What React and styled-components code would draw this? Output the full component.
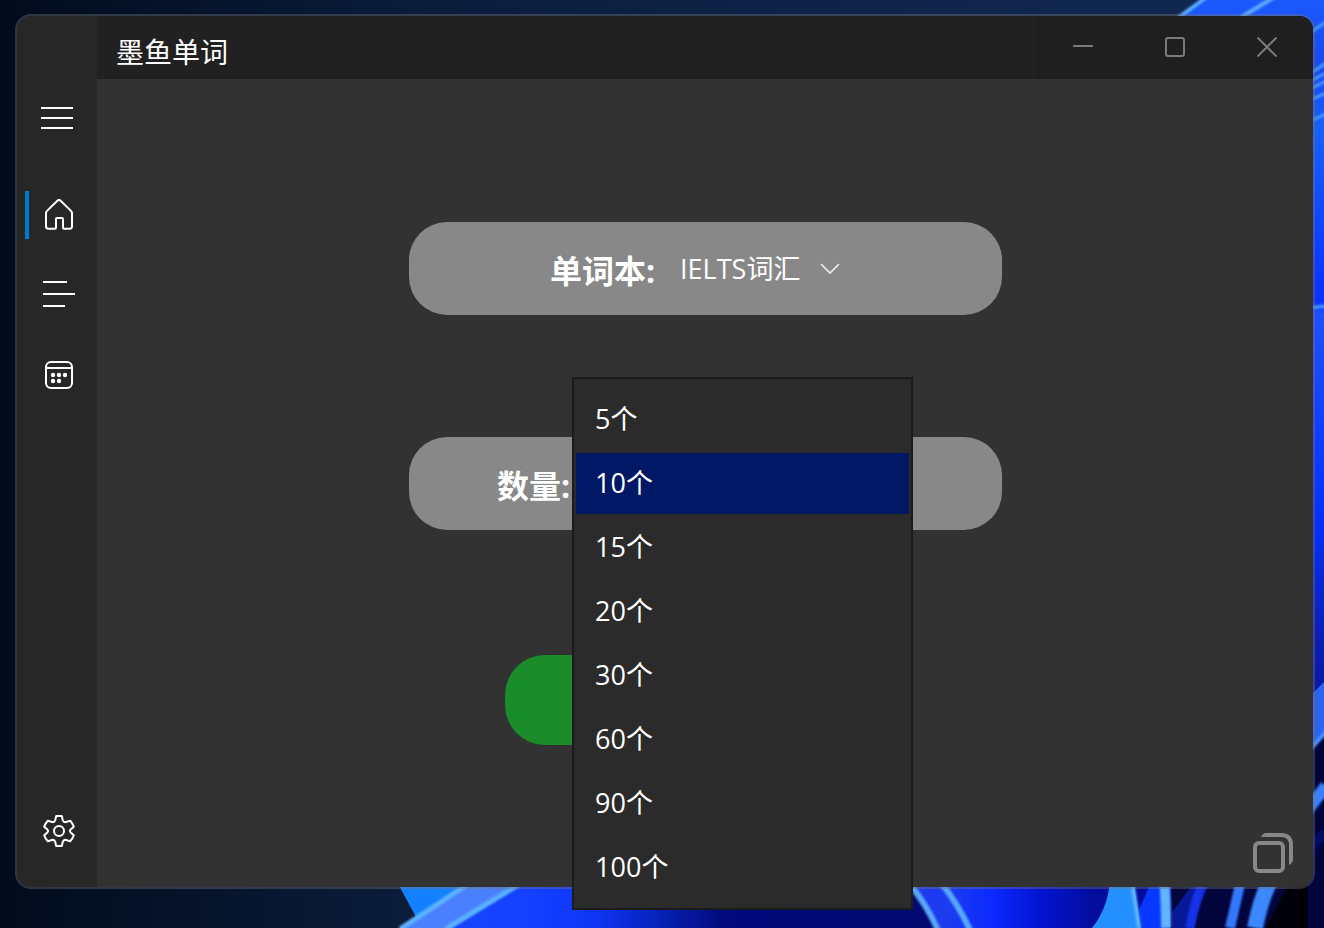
import React, { useState } from "react";
import styled, { createGlobalStyle } from "styled-components";

const GlobalStyle = createGlobalStyle`
  *, *::before, *::after { box-sizing: border-box; }
  body { margin: 0; background: #010b1c; }
  body, button, select {
    font-family: "Open Sans", "Noto Sans CJK SC", sans-serif;
    color: #fff;
  }
  button, select {
    margin: 0;
    padding: 0;
    border: 0;
    background: none;
    cursor: pointer;
  }
`;

const Desktop = styled.div`
  position: relative;
  display: flex;
  min-height: 100vh;
  padding: 14px 9px 39px 15px;
`;

const WallpaperArt = styled.svg`
  position: absolute;
  inset: 0;
  width: 100%;
  height: 100%;
`;

const AppWindow = styled.div`
  position: relative;
  flex: 1;
  display: flex;
  border: 2px solid rgba(118, 118, 118, 0.4);
  border-radius: 16px;
  background: #323232;
  background-clip: padding-box;
`;

const Sidebar = styled.aside`
  display: flex;
  flex-direction: column;
  width: 80px;
  padding: 62px 0 16px;
  background: #272727;
  border-radius: 14px 0 0 14px;
`;

const MenuToggle = styled.button`
  display: grid;
  place-items: center;
  height: 80px;
`;

const Nav = styled.nav`
  flex: 1;
  display: flex;
  flex-direction: column;
  padding-top: 17px;
`;

const NavButton = styled.button`
  display: flex;
  align-items: center;
  gap: 14px;
  height: 80px;
  padding-left: 8px;

  &::before {
    content: "";
    width: 4px;
    height: 48px;
    background: ${(p) => (p.$active ? "#0078d4" : "transparent")};
  }
  &:last-child { margin-top: ${(p) => (p.$end ? "auto" : "0")}; }
`;

const Content = styled.div`
  flex: 1;
  display: flex;
  flex-direction: column;
  min-width: 0;
`;

const TitleBar = styled.header`
  display: flex;
  align-items: stretch;
  justify-content: space-between;
  height: 63px;
  padding-left: 19px;
  background: #212121;
  border-radius: 0 14px 0 0;
`;

const Title = styled.h1`
  margin: 0;
  padding-top: 8px;
  font-size: 28px;
  line-height: 56px;
  font-weight: 400;
`;

const WindowControls = styled.div`
  display: flex;
  background: #1f1f1f;
  border-radius: 0 14px 0 0;
`;

const WindowButton = styled.button`
  display: grid;
  place-items: center;
  width: 92px;
  padding-bottom: 2px;
  color: #7a7a7a;
`;

const Main = styled.main`
  flex: 1;
  display: flex;
  flex-direction: column;
  padding: 143px 20px 14px;
`;

const Form = styled.form`
  display: flex;
  flex-direction: column;
  align-items: center;
  gap: 125px;
`;

const Fields = styled.div`
  display: flex;
  flex-direction: column;
  gap: 122px;
  width: 100%;
  max-width: 593px;
`;

const Pill = styled.div`
  display: flex;
  align-items: center;
  justify-content: center;
  gap: ${(p) => p.$gap}px;
  height: 93px;
  border-radius: 38px;
  background: #888;
`;

const Label = styled.label`
  padding-top: 4px;
  font-size: 32px;
  line-height: 44px;
  font-weight: 700;
  white-space: nowrap;
`;

const SelectBox = styled.div`
  display: grid;
  align-items: center;
  width: 180px;
  color: #eee;
  > * { grid-area: 1 / 1; }
  > svg { justify-self: end; margin-right: 20px; pointer-events: none; }
`;

const Select = styled.select`
  appearance: none;
  width: 100%;
  height: 60px;
  font-size: 27px;
  outline: none;
  option { background: #2b2b2b; }
`;

const Combo = styled.div`
  position: relative;
  width: 341px;
  height: 93px;
`;

const ComboButton = styled.button`
  width: 100%;
  height: 100%;
  padding: 0 22px;
  font-size: 27px;
  text-align: left;
`;

const Menu = styled.div`
  position: absolute;
  top: -60px;
  left: 0;
  z-index: 2;
  display: flex;
  flex-direction: column;
  gap: 3px;
  width: 100%;
  padding: 10px 2px;
  border: 2px solid #1b1b1b;
  background: #2b2b2b;
`;

const MenuItem = styled.button`
  height: 61px;
  padding: 0 19px 2px;
  font-size: 27px;
  line-height: 40px;
  text-align: left;
  background: ${(p) => (p.$selected ? "#001866" : "transparent")};
`;

const StartButton = styled.button`
  width: 100%;
  max-width: 400px;
  height: 90px;
  border-radius: 40px;
  background: #1a8c29;
  font-size: 32px;
  font-weight: 700;
`;

const Footer = styled.footer`
  display: flex;
  justify-content: flex-end;
  margin-top: auto;
`;

const CompactButton = styled.button`
  display: flex;
  color: #888;
`;

const Icon = ({ size = 32, width = 2, children }) => (
  <svg
    width={size}
    height={size}
    viewBox={`0 0 ${size} ${size}`}
    fill="none"
    stroke="currentColor"
    strokeWidth={width}
    aria-hidden="true"
  >
    {children}
  </svg>
);

function Wallpaper() {
  return (
    <WallpaperArt viewBox="0 0 1324 928" preserveAspectRatio="none" aria-hidden="true">
      <defs>
        <linearGradient id="sky">
          <stop offset="0" stopColor="#010b1c" />
          <stop offset="0.3" stopColor="#0a1c3a" />
          <stop offset="0.8" stopColor="#10274f" />
          <stop offset="1" stopColor="#10274f" />
        </linearGradient>
        <linearGradient id="petals">
          <stop offset="0" stopColor="#1648ff" />
          <stop offset="0.24" stopColor="#1440ff" />
          <stop offset="0.36" stopColor="#0e36f6" />
          <stop offset="0.48" stopColor="#0622b8" />
          <stop offset="0.6" stopColor="#020a7c" />
          <stop offset="1" stopColor="#020a70" />
        </linearGradient>
        <linearGradient id="right" x2="0" y2="1">
          <stop offset="0" stopColor="#1b5cff" />
          <stop offset="0.12" stopColor="#1848ee" />
          <stop offset="0.2" stopColor="#1860ff" />
          <stop offset="0.44" stopColor="#0a30ff" />
          <stop offset="0.46" stopColor="#2050ff" />
          <stop offset="0.75" stopColor="#0630fa" />
          <stop offset="0.9" stopColor="#0a20b8" />
          <stop offset="1" stopColor="#0a18a0" />
        </linearGradient>
        <linearGradient id="center">
          <stop offset="0" stopColor="#2038f0" />
          <stop offset="0.1" stopColor="#1c3cf0" />
          <stop offset="0.2" stopColor="#0a2aff" />
          <stop offset="0.32" stopColor="#0414d0" />
          <stop offset="0.45" stopColor="#040c9c" />
          <stop offset="1" stopColor="#041096" />
        </linearGradient>
        <filter id="soft">
          <feGaussianBlur stdDeviation="1" />
        </filter>
      </defs>
      <rect width="1324" height="928" fill="url(#sky)" />
      <path d="M396 880L422 928H520V880Z" fill="#1280ff" />
      <path d="M470 880L400 928H940L900 880Z" fill="url(#petals)" />
      <path d="M470 880L400 928H446L522 880Z" fill="#4a80ff" />
      <path d="M908 880L940 928H1324V700H1300V880Z" fill="url(#center)" />
      <path d="M1110 880Q1108 908 1092 928H1141L1133 880Z" fill="#2490ff" />
      <path d="M1152 880L1139 910L1141 928H1170V880Z" fill="#0838ff" />
      <path d="M1172 880H1300L1324 860V928H1171Z" fill="#02043c" />
      <path d="M1172 912L1196 880H1212Q1200 900 1194 928H1172Z" fill="#061a98" />
      <path d="M1290 880L1324 820V928H1266Z" fill="#000008" />
      <path d="M1178 18Q1200 -2 1230 -14H1324V700H1300V18Z" fill="url(#right)" />
      <path d="M1308 698H1324V928H1308Z" fill="#02043c" />
      <path d="M1308 698L1324 682V734L1308 754Z" fill="#2c64f0" />
      <g fill="none" filter="url(#soft)">
        <path d="M474 880L400 929M526 880L446 929" stroke="#5cb4ff" strokeWidth="5" />
        <path d="M910 884Q926 904 938 930M942 884Q958 904 970 930" stroke="#58a8ff" strokeWidth="6" />
        <path d="M1132 880L1139 928" stroke="#62b4ff" strokeWidth="4" />
        <path d="M1164 880Q1166 900 1166 928" stroke="#62b4ff" strokeWidth="10" />
        <path d="M1204 880Q1194 902 1190 928" stroke="#1232e8" strokeWidth="9" />
        <path d="M1241 880L1230 928" stroke="#3078ff" strokeWidth="10" />
        <path d="M1270 880Q1260 902 1255 928" stroke="#3a88ff" strokeWidth="16" />
        <path d="M1178 18L1208 -4M1240 18L1276 -4" stroke="#5cacff" strokeWidth="4" />
        <path
          d="M1308 34L1326 22M1308 75L1326 63M1308 82L1326 73M1308 90L1326 81M1308 101L1326 93M1308 122L1326 114M1308 308L1326 306"
          stroke="#4a9cff"
          strokeWidth="3"
        />
        <path d="M1306 754L1326 732" stroke="#4c94ff" strokeWidth="4" />
        <path d="M1306 812L1326 786" stroke="#3880ff" strokeWidth="12" />
        <path d="M1306 852L1326 832" stroke="#040a60" strokeWidth="10" />
      </g>
    </WallpaperArt>
  );
}

const HomeIcon = () => (
  <Icon>
    <path
      strokeLinejoin="round"
      d="M3 14.2Q3 12.8 4 11.9L14.4 1.7Q16 .2 17.6 1.7L28 11.9Q29 12.8 29 14.2V27.2Q29 29.8 26.4 29.8H21Q20 29.8 20 28.8V20Q20 19 19 19H14Q13 19 13 20V28.8Q13 29.8 12 29.8H5.6Q3 29.8 3 27.2Z"
    />
  </Icon>
);

const ListIcon = () => (
  <Icon>
    <path d="M0 3H24M0 15H32M0 27H22" />
  </Icon>
);

const CalendarIcon = () => (
  <Icon>
    <rect x="3" y="3" width="26" height="26" rx="5" />
    <path d="M3 9H29" />
    <g fill="currentColor" stroke="none">
      <circle cx="10" cy="16" r="2.2" />
      <circle cx="16" cy="16" r="2.2" />
      <circle cx="22" cy="16" r="2.2" />
      <circle cx="10" cy="22" r="2.2" />
      <circle cx="16" cy="22" r="2.2" />
    </g>
  </Icon>
);

const GearIcon = () => (
  <Icon>
    <path
      strokeLinejoin="round"
      d="M13.2 1H18.8L19.8 5.2Q20.6 7.6 23 7L27.2 5.8Q29.8 8.6 30.8 11.8L27.6 14.6Q26.2 16 27.6 17.4L30.8 20.2Q29.8 23.4 27.2 26.2L23 25Q20.6 24.4 19.8 26.8L18.8 31H13.2L12.2 26.8Q11.4 24.4 9 25L4.8 26.2Q2.2 23.4 1.2 20.2L4.4 17.4Q5.8 16 4.4 14.6L1.2 11.8Q2.2 8.6 4.8 5.8L9 7Q11.4 7.6 12.2 5.2Z"
    />
    <circle cx="16" cy="16" r="5" />
  </Icon>
);

const pages = [
  { id: "home", label: "主页", icon: HomeIcon },
  { id: "list", label: "列表", icon: ListIcon },
  { id: "calendar", label: "日历", icon: CalendarIcon },
];

const counts = [5, 10, 15, 20, 30, 60, 90, 100];

export default function App() {
  const [page, setPage] = useState("home");
  const [count, setCount] = useState(10);
  const [open, setOpen] = useState(true);

  return (
    <>
      <GlobalStyle />
      <Desktop>
        <Wallpaper />
        <AppWindow>
          <Sidebar>
            <MenuToggle type="button" aria-label="菜单">
              <Icon>
                <path d="M0 6H32M0 16H32M0 26H32" />
              </Icon>
            </MenuToggle>
            <Nav>
              {pages.map(({ id, label, icon: PageIcon }) => (
                <NavButton
                  key={id}
                  type="button"
                  aria-label={label}
                  $active={page === id}
                  onClick={() => setPage(id)}
                >
                  <PageIcon />
                </NavButton>
              ))}
              <NavButton type="button" aria-label="设置" $end>
                <GearIcon />
              </NavButton>
            </Nav>
          </Sidebar>
          <Content>
            <TitleBar>
              <Title>墨鱼单词</Title>
              <WindowControls>
                <WindowButton type="button" aria-label="最小化">
                  <Icon size={20}>
                    <path d="M0 9H20" />
                  </Icon>
                </WindowButton>
                <WindowButton type="button" aria-label="最大化">
                  <Icon size={20}>
                    <rect x="1" y="1" width="18" height="18" rx="2" />
                  </Icon>
                </WindowButton>
                <WindowButton type="button" aria-label="关闭">
                  <Icon size={20}>
                    <path d="M.5 .5L19.5 19.5M19.5 .5L.5 19.5" />
                  </Icon>
                </WindowButton>
              </WindowControls>
            </TitleBar>
            <Main>
              <Form onSubmit={(e) => e.preventDefault()}>
                <Fields>
                  <Pill $gap={25}>
                    <Label htmlFor="book">单词本:</Label>
                    <SelectBox>
                      <Select id="book" defaultValue="ielts">
                        <option value="ielts">IELTS词汇</option>
                      </Select>
                      <Icon size={20}>
                        <path strokeWidth="1.6" d="M1 5L10 14L19 5" />
                      </Icon>
                    </SelectBox>
                  </Pill>
                  <Pill $gap={2}>
                    <Label htmlFor="count">数量:</Label>
                    <Combo>
                      <ComboButton
                        id="count"
                        type="button"
                        aria-haspopup="listbox"
                        aria-expanded={open}
                        onClick={() => setOpen(true)}
                      >
                        {open ? null : `${count}个`}
                      </ComboButton>
                      {open && (
                        <Menu role="listbox" aria-label="数量">
                          {counts.map((n) => (
                            <MenuItem
                              key={n}
                              type="button"
                              role="option"
                              aria-selected={n === count}
                              $selected={n === count}
                              onClick={() => {
                                setCount(n);
                                setOpen(false);
                              }}
                            >
                              {n}个
                            </MenuItem>
                          ))}
                        </Menu>
                      )}
                    </Combo>
                  </Pill>
                </Fields>
                <StartButton type="submit" aria-label="开始" />
              </Form>
              <Footer>
                <CompactButton type="button" aria-label="小窗模式">
                  <Icon size={40} width={4}>
                    <rect x="2" y="10" width="28" height="28" rx="4" />
                    <path
                      fill="currentColor"
                      stroke="none"
                      d="M8 4Q10 0 13 0H28Q40 0 40 12V26Q40 30 36 32V12Q36 4 28 4Z"
                    />
                  </Icon>
                </CompactButton>
              </Footer>
            </Main>
          </Content>
        </AppWindow>
      </Desktop>
    </>
  );
}
